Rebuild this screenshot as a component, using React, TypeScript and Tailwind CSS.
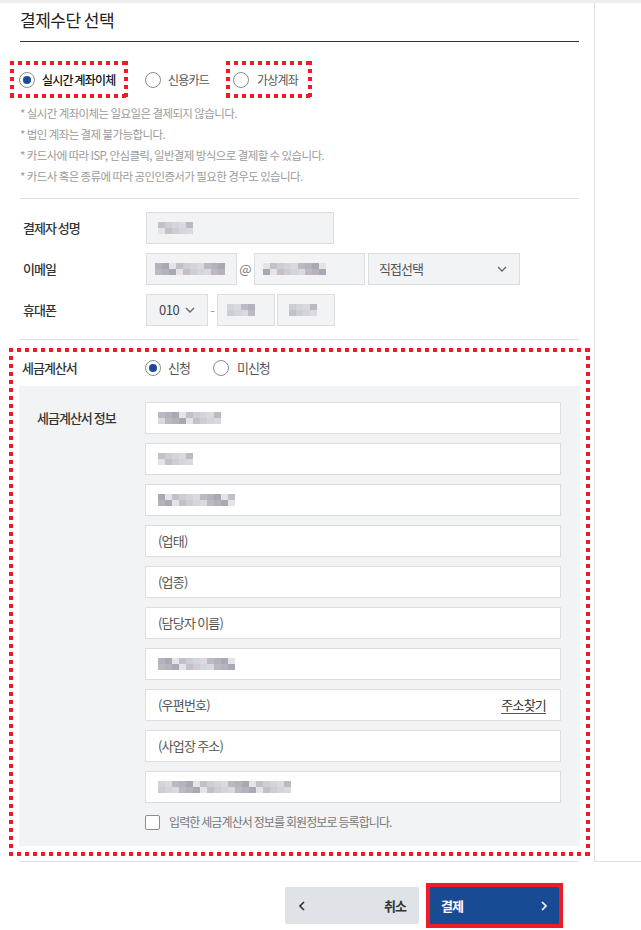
import React from 'react';

const font = "font-['Noto_Sans_CJK_KR','Noto_Sans',sans-serif]";

const shades = ['#dcd9de', '#c2c0c9', '#b3b2bd', '#d2d5dc', '#e6e3e7', '#bdb9c3', '#cfcdd4', '#a9a8b4'];

const Mosaic: React.FC<{ w: number; seed?: number }> = ({ w, seed = 0 }) => {
  const cols = Math.max(2, Math.round(w / 7));
  return (
    <div className="flex flex-col">
      {[0, 1].map((r) => (
        <div key={r} className="flex">
          {Array.from({ length: cols }).map((_, i) => (
            <span
              key={i}
              className="block h-[6px] w-[7px] blur-[0.6px]"
              style={{ backgroundColor: shades[(i * 5 + r * 3 + seed) % shades.length] }}
            />
          ))}
        </div>
      ))}
    </div>
  );
};

const Dotted: React.FC<{ className?: string; children: React.ReactNode }> = ({ className = '', children }) => (
  <div className={`relative ${className}`}>
    {children}
    <span className="absolute left-0 right-0 top-0 h-[4px] bg-[repeating-linear-gradient(to_right,#ee1c25_0_4px,transparent_4px_8px)]" />
    <span className="absolute left-0 right-0 bottom-0 h-[4px] bg-[repeating-linear-gradient(to_right,#ee1c25_0_4px,transparent_4px_8px)]" />
    <span className="absolute top-0 bottom-0 left-0 w-[4px] bg-[repeating-linear-gradient(to_bottom,#ee1c25_0_4px,transparent_4px_8px)]" />
    <span className="absolute top-0 bottom-0 right-0 w-[4px] bg-[repeating-linear-gradient(to_bottom,#ee1c25_0_4px,transparent_4px_8px)]" />
  </div>
);

const Radio: React.FC<{ checked?: boolean }> = ({ checked }) => (
  <span className="flex h-[16px] w-[16px] shrink-0 items-center justify-center rounded-full border border-[#8a8d94] bg-white">
    {checked && <span className="h-[8px] w-[8px] rounded-full bg-[#1a4b96]" />}
  </span>
);

const Chevron: React.FC<{ className?: string }> = ({ className = '' }) => (
  <svg width="10" height="6" viewBox="0 0 10 6" className={className}>
    <path d="M1 1l4 4 4-4" fill="none" stroke="#666" strokeWidth="1.3" />
  </svg>
);

const GrayBox: React.FC<{ className?: string; children?: React.ReactNode }> = ({ className = '', children }) => (
  <div className={`flex h-[32px] items-center border border-[#dcdde1] bg-[#f2f3f5] ${className}`}>{children}</div>
);

const WhiteInput: React.FC<{ children?: React.ReactNode }> = ({ children }) => (
  <div className="flex h-[32px] w-[416px] items-center border border-[#dcdde1] bg-white pl-[12px] pr-[14px] text-[13px] tracking-[-0.8px] text-[#555]">
    {children}
  </div>
);

const App: React.FC = () => {
  return (
    <div className={`${font} w-[641px] min-h-[930px] bg-white text-[#333]`}>
      <div className="h-[3px] bg-[#ededed]" />
      <div className="flex">
        <div className="w-[594px] pl-[20px] pr-[15px]">
          <div className="border-b border-[#333] pt-[5px] pb-[9px]">
            <h2 className="text-[17px] leading-[24px] tracking-[-0.5px] text-[#222]">결제수단 선택</h2>
          </div>

          <div className="ml-[-10px] mt-[19px] flex items-center">
            <Dotted className="flex h-[37px] w-[118px] items-center pl-[9px]">
              <Radio checked />
              <span className="ml-[7px] text-[12px] font-medium tracking-[-0.8px] text-[#111]">실시간 계좌이체</span>
            </Dotted>
            <div className="ml-[17px] flex items-center">
              <Radio />
              <span className="ml-[7px] text-[12px] tracking-[-0.8px] text-[#555]">신용카드</span>
            </div>
            <Dotted className="ml-[17px] flex h-[37px] w-[86px] items-center pl-[7px]">
              <Radio />
              <span className="ml-[8px] text-[12px] tracking-[-0.8px] text-[#555]">가상계좌</span>
            </Dotted>
          </div>

          <ul className="mt-[6px] space-y-[2px] text-[11.5px] leading-[19px] tracking-[-0.6px] text-[#9b9b9b]">
            <li>* 실시간 계좌이체는 일요일은 결제되지 않습니다.</li>
            <li>* 법인 계좌는 결제 불가능합니다.</li>
            <li>* 카드사에 따라 ISP, 안심클릭, 일반결제 방식으로 결제할 수 있습니다.</li>
            <li>* 카드사 혹은 종류에 따라 공인인증서가 필요한 경우도 있습니다.</li>
          </ul>

          <div className="mt-[12px] border-t border-[#dedfe2] pt-[13px] pb-[13px]">
            <div className="flex flex-col gap-[9px]">
              <div className="flex items-center">
                <span className="w-[126px] pl-[3px] text-[13px] font-medium tracking-[-1px]">결제자 성명</span>
                <GrayBox className="w-[188px] pl-[11px]">
                  <Mosaic w={35} seed={1} />
                </GrayBox>
              </div>
              <div className="flex items-center">
                <span className="w-[126px] pl-[3px] text-[13px] font-medium tracking-[-1px]">이메일</span>
                <GrayBox className="w-[91px] pl-[8px]">
                  <Mosaic w={70} seed={2} />
                </GrayBox>
                <span className="w-[17px] text-center text-[13px] text-[#777]">@</span>
                <GrayBox className="w-[111px] pl-[8px]">
                  <Mosaic w={63} seed={4} />
                </GrayBox>
                <GrayBox className="ml-[3px] w-[152px] justify-between pl-[10px] pr-[12px]">
                  <span className="text-[13px] tracking-[-1px] text-[#555]">직접선택</span>
                  <Chevron />
                </GrayBox>
              </div>
              <div className="flex items-center">
                <span className="w-[126px] pl-[3px] text-[13px] font-medium tracking-[-1px]">휴대폰</span>
                <GrayBox className="w-[62px] justify-between pl-[12px] pr-[12px]">
                  <span className="text-[13px] tracking-[-0.5px] text-[#444]">010</span>
                  <Chevron />
                </GrayBox>
                <span className="w-[9px] text-center text-[13px] text-[#999]">-</span>
                <GrayBox className="w-[58px] pl-[9px]">
                  <Mosaic w={28} seed={3} />
                </GrayBox>
                <GrayBox className="ml-[2px] w-[58px] pl-[11px]">
                  <Mosaic w={28} seed={6} />
                </GrayBox>
              </div>
            </div>
          </div>

          <div className="border-t border-[#dedfe2] pt-[8px]">
            <Dotted className="ml-[-11px] mr-[-11px] px-[10px] pt-[2px] pb-[10px]">
              <div className="flex h-[36px] items-center">
                <span className="w-[126px] pl-[3px] text-[13px] font-medium tracking-[-1px]">세금계산서</span>
                <Radio checked />
                <span className="ml-[7px] text-[13px] tracking-[-1px] text-[#555]">신청</span>
                <span className="ml-[23px]">
                  <Radio />
                </span>
                <span className="ml-[8px] text-[13px] tracking-[-1px] text-[#555]">미신청</span>
              </div>
              <div className="flex bg-[#f2f3f5] pt-[16px] pb-[15px]">
                <span className="w-[126px] pl-[18px] pt-[6px] text-[13px] font-medium tracking-[-1px]">세금계산서 정보</span>
                <div className="flex flex-col gap-[9px]">
                  <WhiteInput>
                    <Mosaic w={63} seed={5} />
                  </WhiteInput>
                  <WhiteInput>
                    <Mosaic w={35} seed={1} />
                  </WhiteInput>
                  <WhiteInput>
                    <Mosaic w={77} seed={7} />
                  </WhiteInput>
                  <WhiteInput>(업태)</WhiteInput>
                  <WhiteInput>(업종)</WhiteInput>
                  <WhiteInput>(담당자 이름)</WhiteInput>
                  <WhiteInput>
                    <Mosaic w={79} seed={2} />
                  </WhiteInput>
                  <WhiteInput>
                    <span className="flex-1">(우편번호)</span>
                    <span className="border-b border-[#555] text-[#333] leading-[16px]">주소찾기</span>
                  </WhiteInput>
                  <WhiteInput>(사업장 주소)</WhiteInput>
                  <WhiteInput>
                    <Mosaic w={134} seed={3} />
                  </WhiteInput>
                  <label className="mt-[1px] flex h-[18px] items-center">
                    <span className="h-[15px] w-[15px] rounded-[2px] border border-[#8a8d94] bg-white" />
                    <span className="ml-[9px] text-[12px] leading-[18px] tracking-[-0.9px] text-[#777]">
                      입력한 세금계산서 정보를 회원정보로 등록합니다.
                    </span>
                  </label>
                </div>
              </div>
            </Dotted>
          </div>
          <div className="mt-[5px] border-b border-[#dedfe2]" />
        </div>
        <div className="flex-1 border-l border-b border-[#dedfe2]" />
      </div>

      <div className="mt-[25px] flex items-start pl-[285px]">
        <button className="flex h-[37px] w-[134px] items-center justify-between rounded-[2px] bg-[#dfe2e6] pl-[14px] pr-[13px] text-[13px] font-bold text-[#333]">
          <svg width="6" height="10" viewBox="0 0 6 10">
            <path d="M5 1L1 5l4 4" fill="none" stroke="#333" strokeWidth="1.6" />
          </svg>
          <span className="tracking-[-1px]">취소</span>
        </button>
        <div className="ml-[7px] mt-[-4px] border-[4px] border-[#ee1c25]">
          <button className="flex h-[37px] w-[129px] items-center justify-between bg-[#194b95] pl-[11px] pr-[12px] text-[13px] font-bold text-white">
            <span className="tracking-[-1px]">결제</span>
            <svg width="6" height="10" viewBox="0 0 6 10">
              <path d="M1 1l4 4-4 4" fill="none" stroke="#fff" strokeWidth="1.6" />
            </svg>
          </button>
        </div>
      </div>
    </div>
  );
};

export default App;
